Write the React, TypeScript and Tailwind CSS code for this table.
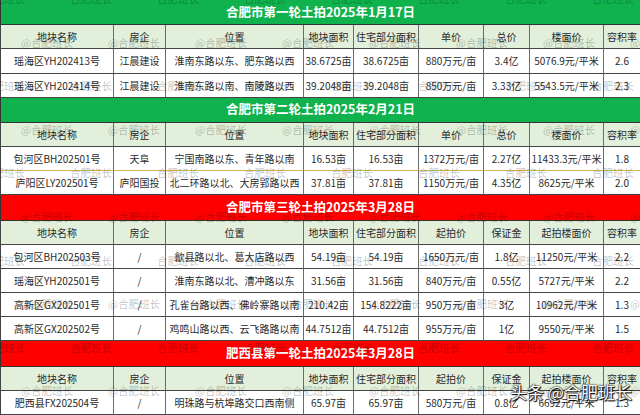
import React from "react";

const COLS =
  "grid grid-cols-[113px_52px_138px_50px_65px_65px_46px_74px_37px]";

type Section = {
  title: string;
  color: "green" | "red";
  headers: string[];
  rows: string[][];
  goldAfterFirst?: boolean;
};

const H1 = ["地块名称", "房企", "位置", "地块面积", "住宅部分面积", "单价", "总价", "楼面价", "容积率"];
const H2 = ["地块名称", "房企", "位置", "地块面积", "住宅部分面积", "起拍价", "保证金", "起拍楼面价", "容积率"];

const sections: Section[] = [
  {
    title: "合肥市第一轮土拍2025年1月17日",
    color: "green",
    headers: H1,
    rows: [
      ["瑶海区YH202413号", "江晨建设", "淮南东路以东、肥东路以西", "38.6725亩", "38.6725亩", "880万元/亩", "3.4亿", "5076.9元/平米", "2.6"],
      ["瑶海区YH202414号", "江晨建设", "淮南东路以南、南陵路以西", "39.2048亩", "39.2048亩", "850万元/亩", "3.33亿", "5543.5元/平米", "2.3"],
    ],
  },
  {
    title: "合肥市第二轮土拍2025年2月21日",
    color: "green",
    headers: H1,
    goldAfterFirst: true,
    rows: [
      ["包河区BH202501号", "天阜", "宁国南路以东、青年路以南", "16.53亩", "16.53亩", "1372万元/亩", "2.27亿", "11433.3元/平米", "1.8"],
      ["庐阳区LY202501号", "庐阳国投", "北二环路以北、大房郢路以西", "37.81亩", "37.81亩", "1150万元/亩", "4.35亿", "8625元/平米", "2.0"],
    ],
  },
  {
    title: "合肥市第三轮土拍2025年3月28日",
    color: "red",
    headers: H2,
    rows: [
      ["包河区BH202503号", "/", "歙县路以北、葛大店路以西", "54.19亩", "54.19亩", "1650万元/亩", "1.8亿", "11250元/平米", "2.2"],
      ["瑶海区YH202501号", "/", "淮南东路以北、漕冲路以东", "31.56亩", "31.56亩", "840万元/亩", "0.55亿", "5727元/平米", "2.2"],
      ["高新区GX202501号", "/", "孔雀台路以西、佛岭寨路以南", "210.42亩", "154.8222亩", "950万元/亩", "3亿", "10962元/平米", "1.3"],
      ["高新区GX202502号", "/", "鸡鸣山路以西、云飞路路以南", "44.7512亩", "44.7512亩", "955万元/亩", "1亿", "9550元/平米", "1.5"],
    ],
  },
  {
    title: "肥西县第一轮土拍2025年3月28日",
    color: "red",
    headers: H2,
    rows: [
      ["肥西县FX202504号", "/", "明珠路与杭埠路交口西南侧", "65.97亩", "65.97亩", "580万元/亩", "0.8亿", "6692元/平米", "1.3"],
    ],
  },
];

function Row({ cells, header, gold }: { cells: string[]; header?: boolean; gold?: boolean }) {
  return (
    <div
      className={`${COLS} flex-1 basis-0 min-h-0 border-l border-[#444] ${
        header ? "bg-[#e2efda]" : "bg-white"
      }`}
    >
      {cells.map((c, i) => (
        <div
          key={i}
          className={`flex items-center justify-center whitespace-nowrap overflow-hidden border-r border-[#6b6b6b] border-b ${
            gold ? "border-b-[#c9b95c]" : "border-b-[#444]"
          } text-[10px] text-[#2a2a2a]`}
        >
          {c}
        </div>
      ))}
    </div>
  );
}

function Title({ text, color }: { text: string; color: "green" | "red" }) {
  return (
    <div
      className={`flex-1 basis-0 min-h-0 flex items-center justify-center border-b border-l border-[#333] ${
        color === "green" ? "bg-[#0fb24c]" : "bg-[#ff0000]"
      } text-white font-bold text-[12.5px]`}
    >
      {text}
    </div>
  );
}

function Watermarks() {
  const items: { x: number; y: number; t: string }[] = [];
  for (let i = 0; i < 10; i++) {
    const y = i * 43.6;
    const at = i % 2 === 1;
    const start = at ? 21 : -17;
    for (let k = 0; k < 8; k++) {
      items.push({ x: start + k * 87, y, t: at ? "@合肥班长" : "合肥班长" });
    }
  }
  return (
    <div className="absolute inset-0 pointer-events-none overflow-hidden">
      {items.map((w, i) => (
        <span
          key={i}
          className="absolute text-[10.5px] leading-none text-black/25 whitespace-nowrap"
          style={{ left: w.x, top: w.y - 6 }}
        >
          {w.t}
        </span>
      ))}
    </div>
  );
}

export default function App() {
  return (
    <div className="relative w-[640px] h-[415px] overflow-hidden bg-white font-['Noto_Sans_CJK_SC',sans-serif]">
      <div className="flex flex-col h-full">
        {sections.map((s, si) => (
          <React.Fragment key={si}>
            <Title text={s.title} color={s.color} />
            <Row cells={s.headers} header />
            {s.rows.map((r, ri) => (
              <Row key={ri} cells={r} gold={s.goldAfterFirst && ri === 0} />
            ))}
          </React.Fragment>
        ))}
      </div>
      <Watermarks />
      <div className="absolute left-[510px] top-[383px] text-[17px] leading-none text-white whitespace-nowrap [text-shadow:0_0_2px_#000,0_0_1px_#000,1px_1px_1px_#000]">
        头条 @合肥班长
      </div>
    </div>
  );
}
